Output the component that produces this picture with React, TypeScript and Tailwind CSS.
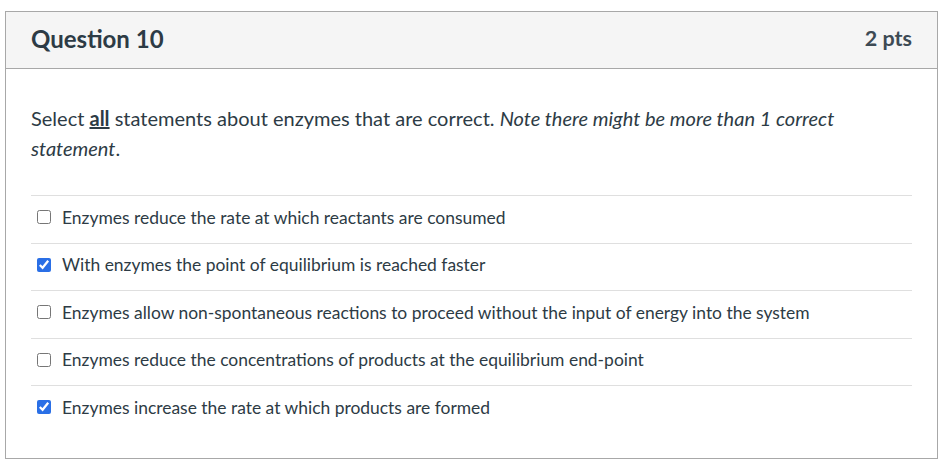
const answers = [
  { text: 'Enzymes reduce the rate at which reactants are consumed', checked: false },
  { text: 'With enzymes the point of equilibrium is reached faster', checked: true },
  {
    text: 'Enzymes allow non-spontaneous reactions to proceed without the input of energy into the system',
    checked: false,
  },
  { text: 'Enzymes reduce the concentrations of products at the equilibrium end-point', checked: false },
  { text: 'Enzymes increase the rate at which products are formed', checked: true },
]

export default function App() {
  return (
    <div className="bg-white w-[942px] h-[466px] pt-[11px] px-[5px] font-['Lato','Noto_Sans',sans-serif] text-[#2d3b45]">
      <div className="border border-[#a8a8a8] w-[933px]">
        <div className="flex items-center justify-between h-[57px] px-[25px] pb-[3px] bg-[#f5f5f5] border-b border-[#a8a8a8]">
          <h2 className="text-[24px] font-bold">Question 10</h2>
          <span className="text-[21.5px] font-bold text-[#3d4a54]">2 pts</span>
        </div>
        <div className="px-[25px] pt-[34px] pb-[25px]">
          <p className="text-[20px] leading-[30px]">
            Select <strong className="underline">all</strong> statements about enzymes that are correct.{' '}
            <em>Note there might be more than 1 correct statement</em>.
          </p>
          <ul className="mt-[32px]">
            {answers.map(a => (
              <li
                key={a.text}
                className="flex items-center gap-[11px] border-t border-[#dfdfdf] pl-[6px] pt-[8.5px] pb-[13px] text-[17.45px] leading-[25px]"
              >
                <input
                  type="checkbox"
                  defaultChecked={a.checked}
                  className="w-[14px] h-[14px] m-0 accent-[#2a6fe6]"
                />
                <span>{a.text}</span>
              </li>
            ))}
          </ul>
        </div>
      </div>
    </div>
  )
}
